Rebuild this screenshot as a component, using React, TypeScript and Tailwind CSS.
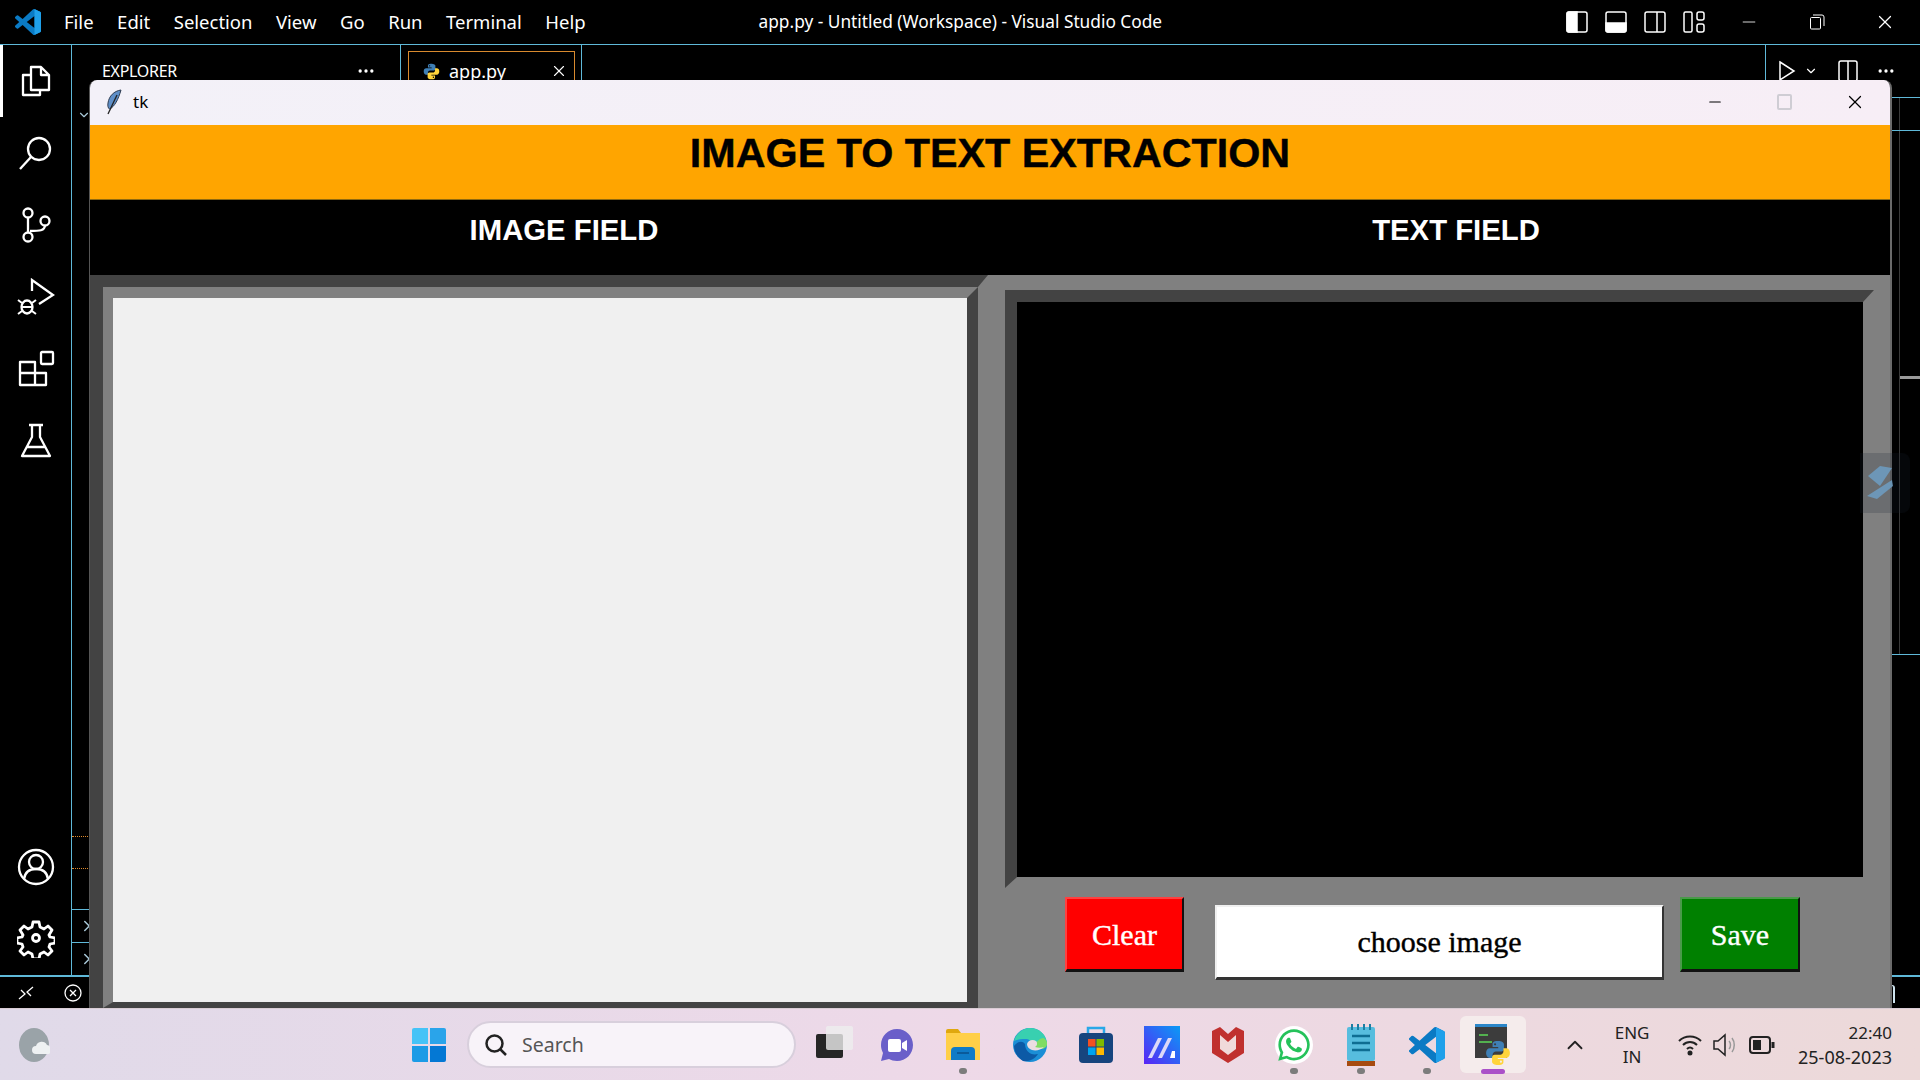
import { X, Minus, ChevronDown, ChevronRight, ChevronUp, Ellipsis } from "lucide-react"
import { FaWhatsapp } from "react-icons/fa"

const menus = ["File", "Edit", "Selection", "View", "Go", "Run", "Terminal", "Help"]

function VsLogo({ size = 24 }: { size?: number }) {
  return (
    <svg width={size} height={size} viewBox="0 0 24 24">
      <path
        d="M23.15 2.587 18.21.21a1.494 1.494 0 0 0-1.705.29l-9.46 8.63-4.12-3.128a.999.999 0 0 0-1.276.057L.327 7.261A1 1 0 0 0 .326 8.74L3.899 12 .326 15.26a1 1 0 0 0 .001 1.479L1.65 17.94a.999.999 0 0 0 1.276.057l4.12-3.128 9.46 8.63a1.492 1.492 0 0 0 1.704.29l4.942-2.377A1.5 1.5 0 0 0 24 20.06V3.939a1.5 1.5 0 0 0-.85-1.352zm-5.146 14.861L10.826 12l7.178-5.448v10.896z"
        fill="#0a7ac4"
      />
      <path d="M18 .1 23.150 2.587A1.500 1.500 0 0 1 24 3.940v16.120a1.500 1.500 0 0 1-.85 1.350L18 23.900z" fill="#1fa0ea" />
    </svg>
  )
}

function PythonLogo({ size = 18 }: { size?: number }) {
  return (
    <svg width={size} height={size} viewBox="0 0 24 24">
      <path d="M12 1c-5 0-5 2-5 3v2.500h5.200v1H4.500C2.500 7.500 1 9.200 1 12s1.500 4.500 3.300 4.500H7v-3c0-1.800 1.500-3 3-3h5c1.400 0 2.500-1.100 2.500-2.500V4c0-1.500-2-3-5.500-3zM9.300 3a1 1 0 1 1 0 2 1 1 0 0 1 0-2z" fill="#3f7fb5" />
      <path d="M12 23c5 0 5-2 5-3v-2.500h-5.200v-1h7.700c2 0 3.500-1.700 3.500-4.500s-1.500-4.500-3.300-4.500H17v3c0 1.800-1.500 3-3 3H9c-1.400 0-2.500 1.100-2.500 2.500V20c0 1.500 2 3 5.500 3zm2.700-2a1 1 0 1 1 0-2 1 1 0 0 1 0 2z" fill="#ffd43b" />
    </svg>
  )
}

// activity bar icons, drawn to follow the codicons in the screenshot
function ActivityIcon({ name }: { name: string }) {
  const common = { width: 38, height: 38, viewBox: "0 0 38 38", fill: "none", stroke: "#fff", strokeWidth: 2.300 }
  if (name === "files")
    return (
      <svg {...common}>
        <path d="M14 5h10l8 8v15H14z M24 5v8h8" strokeLinejoin="round" />
        <path d="M14 13H6v20h17v-5" strokeLinejoin="round" />
      </svg>
    )
  if (name === "search")
    return (
      <svg {...common}>
        <circle cx="22" cy="15" r="11" />
        <path d="M14 23 3 35" />
      </svg>
    )
  if (name === "git")
    return (
      <svg {...common}>
        <circle cx="11" cy="7" r="4.500" />
        <circle cx="11" cy="31" r="4.500" />
        <circle cx="28" cy="15" r="4.500" />
        <path d="M11 11.500v15M13 25c9 0 15 0 15-6" />
      </svg>
    )
  if (name === "debug")
    return (
      <svg {...common}>
        <path d="M15 13V2l21 15-14 9" />
        <ellipse cx="10" cy="29" rx="5.500" ry="6.500" />
        <path d="M4 29h12M1 22l4 3M1 36l4-3M19 22l-4 3M19 36l-4-3" strokeWidth="2" />
      </svg>
    )
  if (name === "ext")
    return (
      <svg {...common}>
        <path d="M3 12h15v11h11v12H3zM3 23h15v12" strokeLinejoin="round" />
        <rect x="24" y="2" width="12" height="12" rx="1" />
      </svg>
    )
  if (name === "flask")
    return (
      <svg {...common}>
        <path d="M12 3h14M15 3v12L5 34h28L23 15V3M10 25h18" strokeLinejoin="round" />
      </svg>
    )
  if (name === "account")
    return (
      <svg {...common}>
        <circle cx="19" cy="19" r="17" />
        <circle cx="19" cy="14" r="7" />
        <path d="M7 31c1-7 6-10 12-10s11 3 12 10" />
      </svg>
    )
  return (
    <svg {...common} strokeWidth={2.800}>
      <circle cx="19" cy="18" r="3.500" />
      <path
        d="M16 2h6l1 5 4 2 4-3 4 4-3 5 1 2 5 1v5l-5 1-1 3 3 4-4 4-4-3-4 2-1 5h-6l-1-5-4-2-4 3-4-4 3-4-1-3-5-1v-5l5-1 1-2-3-5 4-4 4 3 4-2z"
        strokeLinejoin="round"
      />
    </svg>
  )
}

function LayoutIcon({ fill }: { fill: "left" | "bottom" | "right" }) {
  return (
    <svg width="22" height="22" viewBox="0 0 22 22" fill="none" stroke="#fff" strokeWidth="1.500">
      <rect x="1" y="1" width="20" height="20" rx="2" />
      {fill === "left" && <path d="M1 3a2 2 0 0 1 2-2h8v20H3a2 2 0 0 1-2-2z" fill="#fff" />}
      {fill === "bottom" && <path d="M1 12h20v7a2 2 0 0 1-2 2H3a2 2 0 0 1-2-2z" fill="#fff" />}
      {fill === "right" && <path d="M13 1v20" />}
    </svg>
  )
}

function Feather() {
  return (
    <svg width="18" height="26" viewBox="0 0 18 26">
      <path d="M16 1C9 2 4 7 3 14c-.5 3 0 5 1.500 6 5-2 9-10 11.500-19z" fill="#5f8fc8" stroke="#2f3d52" strokeWidth="1" />
      <path d="M12 6 3 25" stroke="#222" strokeWidth="1.300" />
    </svg>
  )
}

function TaskIcon({ children, dot, active }: { children: React.ReactNode; dot?: boolean; active?: boolean }) {
  return (
    <div
      className={`relative flex h-[57px] w-[66.200px] items-center justify-center rounded-md ${active ? "bg-[#f5ecec]" : ""}`}
    >
      {children}
      {dot && <span className="absolute bottom-[-1px] h-[6px] w-[8px] rounded-full bg-[#7c7c7c]" />}
      {active && <span className="absolute bottom-[-1px] h-[5px] w-[24px] rounded-full bg-[#aa50c8]" />}
    </div>
  )
}

export default function App() {
  return (
    <div className="relative flex h-screen w-[1920px] flex-col overflow-hidden bg-black font-['Noto_Sans',sans-serif] text-white">
      {/* VS Code title bar */}
      <header className="flex h-[45px] shrink-0 items-center border-b border-[#5fb9d9] pl-[15px]">
        <VsLogo size={26} />
        <nav className="ml-[23px] flex gap-[23.500px] text-[18.500px]">
          {menus.map((m) => (
            <span key={m}>{m}</span>
          ))}
        </nav>
        <span className="ml-[173px] text-[17.300px]">app.py - Untitled (Workspace) - Visual Studio Code</span>
        <div className="absolute left-[1566px] top-[11px] flex items-center">
          <div className="flex items-center gap-[17px]">
            <LayoutIcon fill="left" />
            <LayoutIcon fill="bottom" />
            <LayoutIcon fill="right" />
            <svg width="22" height="22" viewBox="0 0 22 22" fill="none" stroke="#fff" strokeWidth="1.500">
              <rect x="1" y="1" width="8" height="20" rx="1.500" />
              <rect x="14" y="1" width="7" height="8" rx="2" />
              <rect x="14" y="13" width="7" height="8" rx="2" />
            </svg>
          </div>
          <Minus className="ml-[34px] h-[20px] w-[20px]" strokeWidth={1} />
          <svg className="ml-[50px]" width="16" height="16" viewBox="0 0 16 16" fill="none" stroke="#fff">
            <rect x="1.500" y="3.500" width="10" height="11.500" rx="1" />
            <path d="M4 1h9a2 2 0 0 1 2 2v9" />
          </svg>
          <X className="ml-[49px] h-[22px] w-[22px]" strokeWidth={1.300} />
        </div>
      </header>

      {/* Workbench behind the tk window */}
      <div className="flex min-h-0 flex-1">
        <aside className="flex w-[72px] shrink-0 flex-col border-r border-[#5fb9d9]">
          {["files", "search", "git", "debug", "ext", "flask"].map((n, i) => (
            <div
              key={n}
              className={`flex h-[72px] items-center justify-center ${i === 0 ? "border-l-[3px] border-white pr-[3px]" : ""}`}
            >
              <ActivityIcon name={n} />
            </div>
          ))}
          <div className="mt-auto">
            <div className="flex h-[72px] items-center justify-center">
              <ActivityIcon name="account" />
            </div>
            <div className="flex h-[72px] items-center justify-center">
              <ActivityIcon name="gear" />
            </div>
          </div>
        </aside>

        <div className="flex min-w-0 flex-1 flex-col">
          <div className="flex h-[52px] shrink-0 items-start">
            <div className="flex h-[52px] w-[329px] items-center justify-between border-r border-[#5fb9d9] pl-[30px] pr-[24px]">
              <span className="text-[16px] tracking-[-0.3px]">EXPLORER</span>
              <Ellipsis className="h-[20px] w-[20px]" />
            </div>
            <div className="ml-[7px] mt-[6px] flex h-[40px] w-[167px] items-center border border-[#d98a2e] pl-[14px]">
              <PythonLogo size={17} />
              <span className="ml-[9px] text-[18px]">app.py</span>
              <X className="ml-auto mr-[6px] h-[18px] w-[18px]" strokeWidth={1.500} />
            </div>
            <div className="ml-[6px] h-[52px] border-l border-[#5fb9d9]" />
            <div className="ml-[1183px] flex h-[52px] items-center gap-[8px] border-l border-[#5fb9d9] pl-[12px]">
              <svg width="18" height="22" viewBox="0 0 18 22" fill="none" stroke="#fff" strokeWidth="1.500">
                <path d="M2 2l14 9-14 9z" />
              </svg>
              <ChevronDown className="h-[14px] w-[14px]" />
              <svg className="ml-[12px]" width="20" height="22" viewBox="0 0 20 22" fill="none" stroke="#fff" strokeWidth="1.500">
                <rect x="1" y="1" width="18" height="20" rx="2" />
                <path d="M10 1v20" />
              </svg>
              <Ellipsis className="ml-[10px] h-[20px] w-[20px]" />
            </div>
          </div>

          <ChevronDown className="ml-[5px] mt-[11px] h-[14px] w-[14px] text-[#a9c9d9]" />

          <div className="mt-auto flex h-[100px] w-[20px] flex-col justify-end">
            <div className="flex h-[33px] items-center border-t border-[#5fb9d9]">
              <ChevronRight className="ml-[6px] h-[18px] w-[18px] shrink-0 text-[#a9c9d9]" />
            </div>
            <div className="flex h-[33px] items-center border-t border-[#5fb9d9]">
              <ChevronRight className="ml-[6px] h-[18px] w-[18px] shrink-0 text-[#a9c9d9]" />
            </div>
          </div>
        </div>
      </div>

      {/* Status bar */}
      <div className="flex h-[33px] shrink-0 items-center border-t-2 border-[#5fb9d9] pl-[17px]">
        <svg width="18" height="18" viewBox="0 0 18 18" fill="none" stroke="#fff" strokeWidth="1.300">
          <path d="M2 15l6-5-4-4M16 3l-6 5 4 4" />
        </svg>
        <svg className="ml-[29px]" width="18" height="18" viewBox="0 0 18 18" fill="none" stroke="#fff" strokeWidth="1.300">
          <circle cx="9" cy="9" r="8" />
          <path d="M6 6l6 6M12 6l-6 6" />
        </svg>
      </div>

      {/* Windows taskbar */}
      <footer className="flex h-[72px] shrink-0 items-center border-t border-[#d9ccd4] bg-gradient-to-r from-[#e0dae9] via-[#eed9e8] to-[#ecd9d9] text-[#222]">
        <div className="ml-[17px] flex h-[34px] w-[34px] items-center justify-center">
          <svg width="32" height="36" viewBox="0 0 32 36">
            <ellipse cx="16" cy="18" rx="15" ry="17" fill="#9aa3a8" />
            <path d="M18 27a4 4 0 0 1 0-8 6 6 0 0 1 11-1 5 5 0 0 1 2 9z" fill="#eef1f2" />
          </svg>
        </div>
        <div className="ml-[361px] flex h-[34px] w-[34px] shrink-0 flex-wrap content-between justify-between">
          <span className="h-[16px] w-[16px] rounded-tl-[2px] bg-[#45c3f7]" />
          <span className="h-[16px] w-[16px] rounded-tr-[2px] bg-[#2aa4ea]" />
          <span className="h-[16px] w-[16px] rounded-bl-[2px] bg-[#1b9be6]" />
          <span className="h-[16px] w-[16px] rounded-br-[2px] bg-[#0478d4]" />
        </div>
        <div className="ml-[21px] flex h-[47px] w-[329px] shrink-0 items-center rounded-full border-2 border-[#d8cfdc] bg-[#f8f3f9] pl-[15px]">
          <svg width="24" height="24" viewBox="0 0 24 24" fill="none" stroke="#222" strokeWidth="2.500">
            <circle cx="10.500" cy="10.500" r="8" />
            <path d="M16 16l6 6" />
          </svg>
          <span className="ml-[14px] text-[19.500px] text-[#555]">Search</span>
        </div>
        <div className="ml-[2px] flex items-center">
          <TaskIcon>
            <div className="relative h-[26px] w-[36px]">
              <span className="absolute bottom-0 left-[3px] h-[24px] w-[27px] rounded-[2px] bg-[#262626]" />
              <span className="absolute bottom-[8px] left-[13px] h-[24px] w-[27px] rounded-[2px] bg-[#eeeeee]/80" />
            </div>
          </TaskIcon>
          <TaskIcon>
            <svg width="36" height="36" viewBox="0 0 36 36">
              <path d="M18 2c9 0 16 7 16 16s-7 16-16 16c-3 0-6-.8-8-2l-8 2 2-8C2.500 23 2 20.500 2 18 2 9 9 2 18 2z" fill="#6a5fc9" />
              <rect x="9" y="12" width="13" height="13" rx="2" fill="#fff" />
              <path d="M23 16l5-3v11l-5-3z" fill="#fff" />
            </svg>
          </TaskIcon>
          <TaskIcon dot>
            <svg width="36" height="34" viewBox="0 0 36 34">
              <path d="M1 3a2 2 0 0 1 2-2h10l3 4h-15z" fill="#e0a80e" />
              <path d="M1 5h34v27H1z" fill="#ffcf48" />
              <path d="M6 32v-9a4 4 0 0 1 4-4h16a4 4 0 0 1 4 4v9z" fill="#0f7bc7" />
              <path d="M12 25h12" stroke="#0a5a9a" strokeWidth="2" />
            </svg>
          </TaskIcon>
          <TaskIcon>
            <svg width="36" height="36" viewBox="0 0 36 36">
              <circle cx="18" cy="18" r="17" fill="#1b8ed6" />
              <path d="M2 14C5 4 13 1 18 1c9 0 16 6 17 15 .3 4-3 6-7 6-5 0-8-2-8-5 0-3-3-5-7-5-5 0-10 1-11 2z" fill="#38d0b0" />
              <path d="M35 16c.3 4-3 6-7 6-3 0-5-.8-6.500-2 3-6 7-9 10-9 2 1 3.300 3 3.500 5z" fill="#7fdc63" />
              <path d="M13 17c0 7 6 12 13 10-3 5-9 8-15 7-5-3-9-9-9-15 3-4 8-6 11-2z" fill="#0c5aa6" />
              <path d="M15 17c1-4 6-5 9-3 2 2 1 5-1 6 3 1 6 1 9 0-3 3-8 4-12 3-3-1-5-3-5-6z" fill="#ecdde2" />
            </svg>
          </TaskIcon>
          <TaskIcon>
            <svg width="36" height="38" viewBox="0 0 36 38">
              <path d="M10 8V2h16v6" fill="none" stroke="#28a8e8" strokeWidth="2.500" />
              <rect x="1" y="7" width="34" height="30" rx="4" fill="#17457e" />
              <rect x="10" y="13" width="7.500" height="7.500" fill="#f25022" />
              <rect x="18.500" y="13" width="7.500" height="7.500" fill="#7fba00" />
              <rect x="10" y="21.500" width="7.500" height="7.500" fill="#00a4ef" />
              <rect x="18.500" y="21.500" width="7.500" height="7.500" fill="#ffb900" />
            </svg>
          </TaskIcon>
          <TaskIcon>
            <svg width="36" height="38" viewBox="0 0 36 38">
              <defs>
                <linearGradient id="mz" x1="1" y1="0" x2="0" y2="1">
                  <stop offset="0" stopColor="#0a9bf5" />
                  <stop offset="1" stopColor="#5a25f5" />
                </linearGradient>
              </defs>
              <rect width="36" height="38" fill="url(#mz)" />
              <path d="M4 32 14 12h4L8 32zM14 32 24 12h4l-10 20z" fill="#dcd8f8" />
              <path d="M26 32l2-7h3v7z" fill="#fff" />
            </svg>
          </TaskIcon>
          <TaskIcon>
            <svg width="32" height="38" viewBox="0 0 32 38">
              <path d="M0 5l8-4 8 7 8-7 8 4v22L16 37 0 27z" fill="#c0302e" />
              <path d="M8 9v14l8 6 8-6V9l-8 7z" fill="#f0dada" />
            </svg>
          </TaskIcon>
          <TaskIcon dot>
            <span className="flex h-[38px] w-[38px] items-center justify-center rounded-full bg-white">
              <FaWhatsapp className="h-[36px] w-[36px] text-[#25c25a]" />
            </span>
          </TaskIcon>
          <TaskIcon dot>
            <svg width="28" height="44" viewBox="0 0 28 44">
              <rect y="4" width="28" height="34" rx="2" fill="#57bdde" />
              <path d="M5 1v6M11 1v6M17 1v6M23 1v6" stroke="#1b7ea3" strokeWidth="2" />
              <path d="M5 13h18M5 20h18M5 27h18" stroke="#0e6d92" strokeWidth="2.500" />
              <rect y="38" width="28" height="5" fill="#a64b10" />
            </svg>
          </TaskIcon>
          <TaskIcon dot>
            <VsLogo size={36} />
          </TaskIcon>
          <TaskIcon active>
            <div className="relative h-[42px] w-[36px]">
              <span className="absolute left-0 top-0 h-[34px] w-[32px] border-t-[3px] border-[#2b86c8] bg-[#3c3c3c]" />
              <span className="absolute left-[4px] top-[10px] h-[2px] w-[9px] bg-[#53b04f]" />
              <span className="absolute left-[4px] top-[17px] h-[2px] w-[13px] bg-[#53b04f]" />
              <span className="absolute bottom-0 right-0">
                <PythonLogo size={26} />
              </span>
            </div>
          </TaskIcon>
        </div>
        <ChevronUp className="ml-[36px] h-[26px] w-[26px]" strokeWidth={1.700} />
        <div className="ml-[16px] flex w-[56px] flex-col items-center text-[17px] leading-[24px]">
          <span>ENG</span>
          <span>IN</span>
        </div>
        <svg className="ml-[17px]" width="26" height="24" viewBox="0 0 26 24" fill="none" stroke="#222" strokeWidth="2">
          <path d="M2 8c6-6 16-6 22 0M6 12c4-4 10-4 14 0M10 16c2-2 4-2 6 0" />
          <circle cx="13" cy="20" r="1.500" fill="#222" />
        </svg>
        <svg className="ml-[9px]" width="28" height="26" viewBox="0 0 28 26" fill="none" stroke="#222" strokeWidth="1.500">
          <path d="M2 9h4l7-6v20l-7-6H2z" />
          <path d="M17 9c2 2 2 6 0 8M20 6c3 4 3 10 0 14" stroke="#999" />
        </svg>
        <svg className="ml-[9px]" width="26" height="18" viewBox="0 0 26 18" fill="none" stroke="#222" strokeWidth="2">
          <rect x="1" y="1" width="20" height="16" rx="3" />
          <rect x="4" y="4" width="8" height="10" fill="#222" stroke="none" />
          <path d="M24 6v6" strokeWidth="3" />
        </svg>
        <div className="ml-auto mr-[28px] flex flex-col items-end text-[17px] leading-[25px]">
          <span>22:40</span>
          <span className="text-[18px]">25-08-2023</span>
        </div>
      </footer>

      {/* right edge of the editor, visible past the tk window */}
      <div className="absolute left-[1899px] top-[98px] h-[556px] w-[21px] border-l border-[#3a3a3a]">
        <div className="mt-[278px] h-[3px] w-full bg-[#9a9a9a]" />
      </div>
      <div className="absolute left-[1890px] top-[97px] h-[1px] w-[30px] bg-[#5fb9d9]" />
      <div className="absolute left-[1890px] top-[130px] h-[1px] w-[30px] bg-[#5fb9d9]" />
      <div className="absolute left-[1890px] top-[654px] h-[1px] w-[30px] bg-[#5fb9d9]" />
      <div className="absolute left-[1891px] top-[985px] h-[18px] w-[4px] rounded-tr-[3px] border-r-2 border-t border-[#cfe4ee]" />
      <div className="absolute left-[72px] top-[836px] h-[33px] w-[18px] border-y border-dotted border-[#e08a2c]" />

      {/* tk window */}
      <div className="absolute left-[89px] top-[80px] flex h-[928px] w-[1803px] flex-col overflow-hidden rounded-t-[8px] border-l border-r-2 border-l-[#555] border-r-[#6a6a6a] font-['Liberation_Sans',sans-serif]">
        <div className="flex h-[45px] shrink-0 items-center bg-gradient-to-r from-[#f3f1f8] to-[#f7eef6] pb-[1px] pl-[15px] font-['Noto_Sans',sans-serif] text-black">
          <Feather />
          <span className="ml-[10px] text-[17px]">tk</span>
          <Minus className="ml-auto h-[18px] w-[18px]" strokeWidth={1.500} />
          <span className="ml-[53px] h-[16px] w-[15px] rounded-[2px] border-2 border-[#cfcdd4]" />
          <X className="ml-[52px] mr-[24px] h-[22px] w-[22px]" strokeWidth={1.300} />
        </div>

        <div className="h-[75px] shrink-0 border-b border-[#8f6a10] bg-[#ffa500] pt-[4px] text-center text-[41.300px] font-bold leading-[48px] text-black [-webkit-text-stroke:0.4px]">
          IMAGE TO TEXT EXTRACTION
        </div>

        <div className="flex h-[75px] shrink-0 items-start bg-black pt-[12px] text-[29.300px] font-bold leading-[36px] text-white">
          <div className="w-[948px] text-center">IMAGE FIELD</div>
          <div className="w-[836px] text-center">TEXT FIELD</div>
        </div>

        <div className="flex min-h-0 flex-1">
          {/* image field */}
          <div className="flex w-[898px] shrink-0 border-l-[13px] border-r-[10px] border-t-[12px] border-l-[#434343] border-r-[#808080] border-t-[#434343]">
            <div className="flex-1 border-b-[6px] border-l-[10px] border-r-[11px] border-t-[11px] border-b-[#434343] border-l-[#808080] border-r-[#434343] border-t-[#808080] bg-[#f0f0f0]" />
          </div>

          {/* text field + buttons */}
          <div className="flex min-w-0 flex-1 flex-col bg-[#808080] pl-[17px] pr-[16px] pt-[15px]">
            <div className="h-[598px] shrink-0 border-b-[11px] border-l-[12px] border-r-[11px] border-t-[12px] border-b-[#808080] border-l-[#434343] border-r-[#808080] border-t-[#434343] bg-black" />
            <div className="flex items-start pl-[60px] pt-[9px] font-['Liberation_Serif',serif] text-[30px] [-webkit-text-stroke:0.4px]">
              <button className="flex h-[75px] w-[119px] items-center justify-center border-2 border-b-[3px] border-l-[#ff4040] border-t-[#ff4040] border-r-[#111] border-b-[#111] bg-[#ff0000] text-white">
                Clear
              </button>
              <button className="ml-[31px] mt-[8px] flex h-[75px] w-[449px] items-center justify-center border-2 border-b-[3px] border-l-[#f0f0f0] border-t-[#f0f0f0] border-r-[#333] border-b-[#333] bg-white pb-[2px] text-black">
                choose image
              </button>
              <button className="ml-[16px] flex h-[75px] w-[120px] items-center justify-center border-2 border-b-[3px] border-l-[#4a9a4a] border-t-[#4a9a4a] border-r-[#111] border-b-[#111] bg-[#008000] text-white">
                Save
              </button>
            </div>
          </div>
        </div>
      </div>

      {/* floating side widget over the window edge */}
      <div className="absolute left-[1860px] top-[453px] h-[60px] w-[50px] rounded-r-[8px] bg-[#1a2230]/20">
        <svg width="50" height="60" viewBox="0 0 50 60" fill="#6e9ec4" opacity=".85">
          <path d="M20 13l12 2-12 18-12-10z" />
          <path d="M32 27l1 6-16 13-10-3z" />
        </svg>
      </div>
    </div>
  )
}
